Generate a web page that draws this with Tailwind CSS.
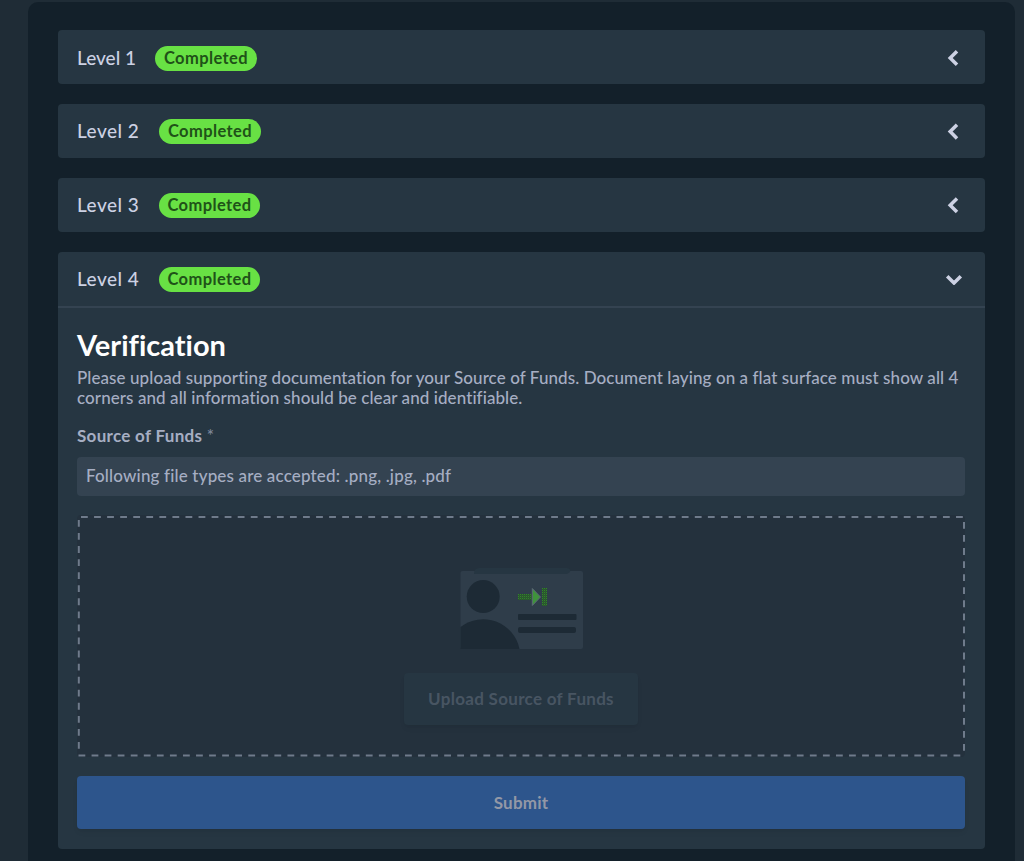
<!DOCTYPE html>
<html lang="en">
<head>
<meta charset="utf-8">
<title>Verification levels</title>
<script src="https://cdn.jsdelivr.net/npm/@tailwindcss/browser@4"></script>
</head>
<body class="h-[861px] overflow-hidden bg-[#1f2c36] pt-[2px] pl-[28px] pr-[9px] font-['Lato',sans-serif] font-medium [font-variant-ligatures:none]">
<main class="flex h-[880px] flex-col gap-[20px] rounded-[10px] bg-[#13202a] pt-[28px] pl-[30px] pr-[30px]">
  <section class="flex h-[54px] shrink-0 items-center rounded bg-[#263642] pt-[2px] pl-[19px] pr-[26px]">
    <h2 class="w-[58px] text-[19px] whitespace-nowrap text-[#ccd1e3]">Level 1</h2>
    <span class="ml-[20px] flex h-[25px] w-[102px] items-center justify-center rounded-full bg-[#68e144] text-[16.5px] font-bold tracking-[0.4px] text-[#1f5218]">Completed</span>
    <svg class="ml-auto" width="12" height="18" viewBox="0 0 12 18" fill="none" stroke="#ccd1e3" stroke-width="3.5"><path d="M10 2.200 3.200 9 10 15.800"/></svg>
  </section>
  <section class="flex h-[54px] shrink-0 items-center rounded bg-[#263642] pl-[19px] pr-[26px]">
    <h2 class="w-[62px] text-[19px] tracking-[0.45px] whitespace-nowrap text-[#ccd1e3]">Level 2</h2>
    <span class="ml-[20px] flex h-[25px] w-[102px] items-center justify-center rounded-full bg-[#68e144] text-[16.5px] font-bold tracking-[0.4px] text-[#1f5218]">Completed</span>
    <svg class="ml-auto" width="12" height="18" viewBox="0 0 12 18" fill="none" stroke="#ccd1e3" stroke-width="3.5"><path d="M10 2.800 3.200 9.600 10 16.400"/></svg>
  </section>
  <section class="flex h-[54px] shrink-0 items-center rounded bg-[#263642] pl-[19px] pr-[26px]">
    <h2 class="w-[62px] text-[19px] tracking-[0.45px] whitespace-nowrap text-[#ccd1e3]">Level 3</h2>
    <span class="ml-[20px] flex h-[25px] w-[101px] items-center justify-center rounded-full bg-[#68e144] text-[16.5px] font-bold tracking-[0.4px] text-[#1f5218]">Completed</span>
    <svg class="ml-auto" width="12" height="18" viewBox="0 0 12 18" fill="none" stroke="#ccd1e3" stroke-width="3.5"><path d="M10 2.500 3.200 9.300 10 16.100"/></svg>
  </section>
  <section class="h-[597px] shrink-0 rounded bg-[#263642]">
    <header class="flex h-[56px] items-center border-b-2 border-[#344351] pl-[19px] pr-[22px]">
      <h2 class="w-[62px] text-[19px] tracking-[0.45px] whitespace-nowrap text-[#ccd1e3]">Level 4</h2>
      <span class="ml-[20px] flex h-[25px] w-[101px] items-center justify-center rounded-full bg-[#68e144] text-[16.5px] font-bold tracking-[0.4px] text-[#1f5218]">Completed</span>
      <svg class="ml-auto" width="18" height="12" viewBox="0 0 18 12" fill="none" stroke="#ccd1e3" stroke-width="3.5"><path d="M2.200 3.200 9 10 15.800 3.200"/></svg>
    </header>
    <div class="flex flex-col pt-[19px] pl-[19px] pr-[20px]">
      <h1 class="h-[41px] text-[29px] leading-[36px] font-bold text-white">Verification</h1>
      <p class="text-[17px] leading-[20px] tracking-[0.08px] whitespace-nowrap text-[#a6aec3]">Please upload supporting documentation for your Source of Funds. Document laying on a flat surface must show all 4<br>corners and all information should be clear and identifiable.</p>
      <label class="mt-[18px] h-[20px] text-[17px] leading-[20px] font-bold tracking-[0.3px] text-[#a6aec3]">Source of Funds <span class="text-[17px] font-medium text-[#7f899b]">*</span></label>
      <div class="mt-[11px] flex h-[39px] items-center rounded bg-[#344351] pb-px pl-[9px] text-[17px] tracking-[0.16px] text-[#a6aec3]">Following file types are accepted: .png, .jpg, .pdf</div>
      <div class="relative mt-[19px] flex h-[242px] flex-col items-center rounded-[4px] bg-[#24313d] pt-[52px]">
        <svg class="absolute inset-0" width="888" height="242" fill="none" stroke="#6f7b8b" stroke-width="2" stroke-dasharray="6.8 6.26"><path d="M4 2H886M1.800 5V236M1.500 240.500H884M887 7V236"/></svg>
        <svg class="ml-[2px] shrink-0" width="124" height="84" viewBox="460 567 124 84">
          <defs>
            <pattern id="grain" width="2" height="2" patternUnits="userSpaceOnUse">
              <rect width="2" height="2" fill="#2a4d34"/>
              <rect width="1" height="1" fill="#318a24"/>
              <rect x="1" y="1" width="1" height="1" fill="#2a6527"/>
            </pattern>
          </defs>
          <path d="M460.500 573a2 2 0 0 1 2-2H581a2 2 0 0 1 2 2V647a2 2 0 0 1-2 2H462.500a2 2 0 0 1-2-2Z" fill="#2f3d4a"/>
          <path d="M474 574Q474 568 479 568H567Q571 569 570 572L567 574Z" fill="#263642"/>
          <circle cx="483.200" cy="596.600" r="16.500" fill="#1d2a35"/>
          <path d="M460.500 627A37 37 0 0 1 519.500 649H460.500Z" fill="#1d2a35"/>
          <rect x="518" y="614" width="58.500" height="6" rx="1" fill="#1d2a35"/>
          <rect x="518" y="627" width="58" height="6" rx="2" fill="#1d2a35"/>
          <rect x="518" y="594" width="14" height="6" fill="url(#grain)"/>
          <path d="M532.300 588.500 540.500 597 532.300 605.500Z" fill="#3f943b" stroke="#5c6976"/>
          <rect x="542" y="588" width="5" height="18" fill="url(#grain)"/>
        </svg>
        <button class="mt-[22px] h-[52px] w-[234px] shrink-0 rounded bg-[#263642] text-[17px] font-bold tracking-[0.3px] text-[#485562] shadow-md shadow-black/5">Upload Source of Funds</button>
      </div>
      <button class="mt-[19px] h-[53px] rounded bg-[#2d558c] text-[17px] font-bold tracking-[0.2px] text-[#9398a6] shadow-md shadow-black/5">Submit</button>
    </div>
  </section>
</main>
</body>
</html>
